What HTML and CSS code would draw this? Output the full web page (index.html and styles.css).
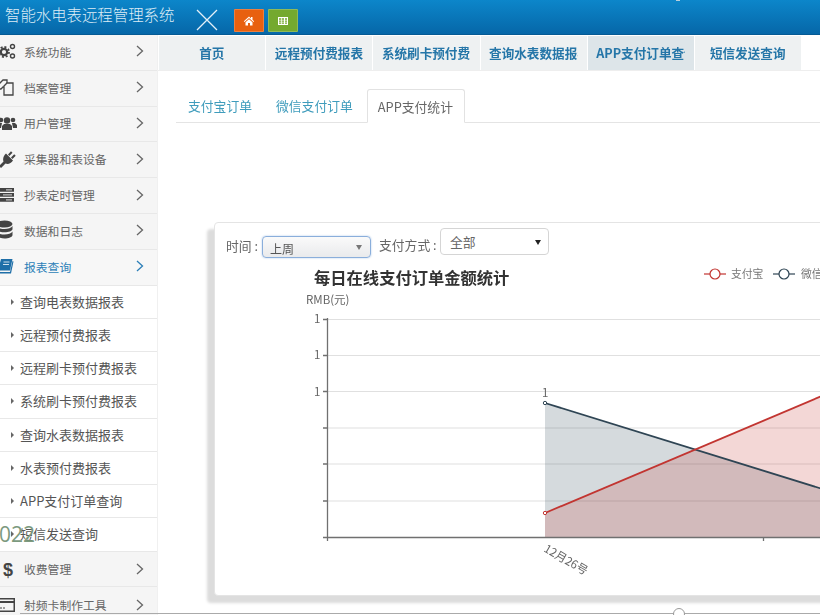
FILE: index.html
```html
<!DOCTYPE html>
<html lang="zh">
<head>
<meta charset="utf-8">
<title>智能水电表远程管理系统</title>
<link rel="stylesheet" href="styles.css">
</head>
<body>
<div class="app">
  <header class="header">
    <div class="brand">智能水电表远程管理系统</div>
    <svg class="close-x" viewBox="0 0 22 22"><path d="M1 1 21 21M21 1 1 21"/></svg>
    <button class="hbtn orange"><svg viewBox="0 0 12 12"><path d="M6 1.500 0.800 6.200l.7.7L6 3l4.500 3.900.7-.7L9.500 4.700V2H8v1.400zM2.500 7.200 6 4.200l3.500 3V10.500H7V8H5v2.500H2.500z"/></svg></button>
    <button class="hbtn green"><svg viewBox="0 0 12 12"><path d="M1 2h10v8H1zM2 3.200v1.500h2.300V3.200zm3 0v1.500h2V3.200zm3 0v1.500h2V3.200zM2 5.400v1.300h2.300V5.400zm3 0v1.300h2V5.400zm3 0v1.300h2V5.400zM2 7.400v1.400h2.300V7.400zm3 0v1.400h2V7.400zm3 0v1.400h2V7.400z" fill-rule="evenodd"/></svg></button>
    <i class="top-dot"></i>
  </header>
  <div class="body">
    <aside class="sidebar">
      <a class="item"><svg class="ico" viewBox="0 0 18 18"><g fill="none" stroke="#444"><circle cx="6" cy="10" r="3.200" stroke-width="2.200"/><circle cx="6" cy="10" r="5" stroke-width="1.800" stroke-dasharray="2 1.900"/><circle cx="14.500" cy="4.500" r="2" stroke-width="1.400"/><circle cx="14.500" cy="14" r="2" stroke-width="1.400"/></g></svg><span>系统功能</span><svg class="chev" viewBox="0 0 8 12"><path d="M1 1l5.500 5L1 11"/></svg></a>
      <a class="item"><svg class="ico" viewBox="0 0 18 18"><g fill="#f5f5f5" stroke="#444" stroke-width="1.300"><path d="M0 7 5 2h4v7H5l-2 2H0z"/><path d="M6 8l3-3h6v12H6z"/></g></svg><span>档案管理</span><svg class="chev" viewBox="0 0 8 12"><path d="M1 1l5.500 5L1 11"/></svg></a>
      <a class="item"><svg class="ico" viewBox="0 0 18 18"><g fill="#444"><circle cx="3" cy="6" r="2.300"/><circle cx="15" cy="6" r="2.300"/><circle cx="9" cy="6.500" r="3.200"/><path d="M-1 14v-3l2-2h3l-1 5zM19 14v-3l-2-2h-3l1 5zM4 16v-4l2-2h6l2 2v4z"/></g></svg><span>用户管理</span><svg class="chev" viewBox="0 0 8 12"><path d="M1 1l5.500 5L1 11"/></svg></a>
      <a class="item"><svg class="ico" viewBox="0 0 18 18"><g fill="#444"><path d="M8 3.500 15 10.500c-2 3-5 4-7.500 3L3 18l-2-2 4.500-4.500C4.500 9 5.500 5.500 8 3.500z"/><path d="M10 4.500 13 1.200l1.500 1.500-3.200 3.200zM13 7.500l3.200-3.200 1.500 1.500-3.200 3.200z"/></g></svg><span>采集器和表设备</span><svg class="chev" viewBox="0 0 8 12"><path d="M1 1l5.500 5L1 11"/></svg></a>
      <a class="item"><svg class="ico" viewBox="0 0 18 18"><path fill="#444" d="M-2 2h18v3.800H-2zM-2 7h18v3.800H-2zM-2 12h18v3.800H-2z"/><path stroke="#ddd" d="M8 3.900h6M5 8.900h9M8 13.900h6"/></svg><span>抄表定时管理</span><svg class="chev" viewBox="0 0 8 12"><path d="M1 1l5.500 5L1 11"/></svg></a>
      <a class="item"><svg class="ico" viewBox="0 0 18 18"><g fill="#444"><ellipse cx="6.500" cy="3" rx="8" ry="3.500"/><path d="M-1.500 5v3C-1.500 10 2.500 11.300 6.500 11.300S14.500 10 14.500 8V5c-1 2-4.500 3-8 3s-7-1-8-3z"/><path d="M-1.500 10.500v3.500C-1.500 16 2.500 17.500 6.500 17.500S14.500 16 14.500 14v-3.500c-1 2-4.500 3-8 3s-7-1-8-3z"/></g></svg><span>数据和日志</span><svg class="chev" viewBox="0 0 8 12"><path d="M1 1l5.500 5L1 11"/></svg></a>
      <a class="item active"><svg class="ico" viewBox="0 0 18 18"><path fill="#1f6fa8" d="M3 2h11.500L12 13.500H2.500c-.8 0-.8 1.500 0 1.500h9.500l2.500-11 1 .5L13 16.500H1.500C-.5 16.500-.5 14 0 13z"/><path stroke="#cfe0ec" d="M5.500 5h6M5 7.500h6"/></svg><span>报表查询</span><svg class="chev" viewBox="0 0 8 12"><path d="M1 1l5.500 5L1 11"/></svg></a>
      <ul class="submenu">
        <li>查询电表数据报表</li>
        <li>远程预付费报表</li>
        <li>远程刷卡预付费报表</li>
        <li>系统刷卡预付费报表</li>
        <li>查询水表数据报表</li>
        <li>水表预付费报表</li>
        <li>APP支付订单查询</li>
        <li>短信发送查询<b class="stamp">022</b></li>
      </ul>
      <a class="item low"><span class="dollar">$</span><span>收费管理</span><svg class="chev" viewBox="0 0 8 12"><path d="M1 1l5.500 5L1 11"/></svg></a>
      <a class="item low"><svg class="ico" viewBox="0 0 18 18"><path fill="#444" d="M-2 2h19v14H-2zM-.5 7v7.500h16V7zM-.5 3.500v1.500h16V3.500z" fill-rule="evenodd"/><path stroke="#444" d="M1 12h3M5 12h2"/></svg><span>射频卡制作工具</span><svg class="chev" viewBox="0 0 8 12"><path d="M1 1l5.500 5L1 11"/></svg></a>
    </aside>
    <main class="main">
      <nav class="navtabs">
        <a class="navtab"><span>首页</span></a>
        <a class="navtab"><span>远程预付费报表</span></a>
        <a class="navtab"><span>系统刷卡预付费报表</span></a>
        <a class="navtab"><span>查询水表数据报表</span></a>
        <a class="navtab current"><span>APP支付订单查询</span></a>
        <a class="navtab"><span>短信发送查询</span></a>
      </nav>
      <div class="subtabs">
        <a class="subtab">支付宝订单</a>
        <a class="subtab">微信支付订单</a>
        <a class="subtab on">APP支付统计</a>
      </div>
      <section class="card">
        <div class="filters">
          <label class="flabel first">时间 :</label>
          <div class="sel week">上周<i></i></div>
          <label class="flabel second">支付方式 :</label>
          <div class="sel pay">全部<i></i></div>
        </div>
        <svg class="chart" viewBox="215 262 700 333" width="700" height="333">
          <text x="314" y="284" class="c-title">每日在线支付订单金额统计</text>
          <g class="legend">
            <path d="M704 274h22" stroke="#c23531"/><circle cx="715" cy="274" r="5" fill="#fff" stroke="#c23531"/>
            <text x="731" y="278">支付宝</text>
            <path d="M773 274h22" stroke="#2f4554"/><circle cx="784" cy="274" r="5" fill="#fff" stroke="#2f4554"/>
            <text x="801" y="278">微信</text>
          </g>
          <text x="306" y="304" class="c-label">RMB(元)</text>
          <path class="grid" d="M328 319.500H900M328 355.500H900M328 391.500H900M328 428H900M328 464H900M328 501H900"/>
          <polygon points="545,403 900,513 900,537 545,537" fill="#2f4554" fill-opacity=".2"/>
          <polygon points="545,513 900,363 900,537 545,537" fill="#c23531" fill-opacity=".2"/>
          <path class="axis" d="M327.500 318V541M323 319.500h5M323 355.500h5M323 391.500h5M323 428h5M323 464h5M323 501h5M323 537.500H900M763.500 537v4"/>
          <polyline points="545,403 900,513" fill="none" stroke="#2f4554" stroke-width="1.800"/>
          <polyline points="545,513 900,363" fill="none" stroke="#c23531" stroke-width="1.800"/>
          <circle cx="545" cy="403" r="1.700" fill="#fff" stroke="#2f4554"/>
          <circle cx="545" cy="513" r="1.700" fill="#fff" stroke="#c23531"/>
          <g class="c-label">
            <text x="314" y="323">1</text>
            <text x="314" y="359">1</text>
            <text x="314" y="396">1</text>
            <text x="542" y="397">1</text>
            <text x="543" y="551" transform="rotate(30 543 551)">12月26号</text>
          </g>
        </svg>
      </section>
    </main>
  </div>
  <div class="slider"><i></i></div>
</div>
</body>
</html>
```
FILE: styles.css
```css
* { box-sizing: border-box; }
html, body { margin: 0; padding: 0; height: 100%; overflow: hidden; background: #fff; }
body { font-family: "Noto Sans CJK SC", "Open Sans", sans-serif; color: #666; }
.app { position: relative; width: 820px; height: 615px; overflow: hidden; filter: blur(.35px); }

.header { position: relative; display: flex; align-items: flex-start; height: 35px; background: linear-gradient(#0c86ca, #0667a8); border-bottom: 1px solid #055a94; }
.brand { margin: 4px 0 0 5px; width: 181px; font-size: 15.400px; line-height: 20px; white-space: nowrap; color: #dcecf6; font-weight: 300; }
.close-x { width: 22px; height: 22px; margin: 9px 16px 0 10px; fill: none; stroke: #e4f0f8; stroke-width: 1.300; flex: none; }
.hbtn { width: 30px; height: 23px; margin: 9px 4px 0 0; padding: 0; border: 1px solid rgba(255,255,255,.2); border-radius: 1px; display: flex; align-items: center; justify-content: center; }
.hbtn svg { width: 12px; height: 12px; fill: #fff; }
.orange { background: #e8600f; }
.green { background: #74a92f; }
.top-dot { position: absolute; left: 676px; top: 0; width: 4px; height: 1px; background: #b8cfdc; }

.body { display: flex; height: 580px; }
.sidebar { width: 158px; flex: none; background: #f5f5f5; border-right: 1px solid #f0f0f0; overflow: hidden; }
.item { display: flex; align-items: center; height: 35.800px; padding-bottom: 2px; border-bottom: 1px solid #e8e8e8; font-size: 11.800px; color: #666; }
.item.low { padding-bottom: 0; }
.item span { flex: 1; }
.item .ico { width: 18px; height: 18px; margin: 0 8px 0 -2px; flex: none; overflow: visible; }
.item .dollar { flex: none; width: 16px; margin: 4px 8px 0 0; text-align: center; font: bold 18px "Liberation Sans", sans-serif; color: #444; }
.chev { width: 8px; height: 12px; margin-right: 13px; fill: none; stroke: #666; stroke-width: 1.300; flex: none; }
.item.active { color: #2c7fb8; background: #f7f7f7; }
.item.active .chev { stroke: #2c7fb8; }

.submenu { list-style: none; margin: 0; padding: 0; background: #fff; }
.submenu li { position: relative; height: 33.250px; line-height: 32px; padding-left: 20px; font-size: 13px; color: #555; border-bottom: 1px solid #e8e8e8; white-space: nowrap; }
.submenu li::before { content: ""; position: absolute; left: 11px; top: 13px; border-left: 3px solid #666; border-top: 3px solid transparent; border-bottom: 3px solid transparent; }
.stamp { position: absolute; left: -1px; top: 4px; font: 400 21px/24px "Open Sans", sans-serif; color: #7c9a7e; }

.main { flex: 1; min-width: 0; }
.navtabs { display: flex; height: 36px; padding: 1px 0 0 1px; gap: 1px; border-bottom: 1px solid #eee; }
.navtab { width: 106.200px; height: 34px; padding: 0 9.200px 0 8.500px; background: #eef1f2; text-align: center; font-size: 12.600px; font-weight: 700; line-height: 34px; color: #2576a8; }
.navtab span { display: block; overflow: hidden; white-space: nowrap; }
.navtab.current { background: #dde5e9; }

.subtabs { display: flex; height: 52px; margin: 0 0 0 18px; padding: 18px 0 0 0; border-bottom: 1px solid #e4e4e4; }
.subtab { height: 34px; padding: 0 12px; line-height: 33px; font-size: 12.800px; color: #3f9cbc; }
.subtab.on { margin: 0 0 -1px 2px; background: #fff; color: #666; border: 1px solid #e2e2e2; border-bottom-color: #fff; border-radius: 3px 3px 0 0; padding: 0 11px 0 10px; }

.card { width: 700px; height: 374px; margin: 99px 0 0 56px; background: #fff; border: 1px solid #e4e4e4; border-radius: 4px; box-shadow: -7px 7px 3px #dcdcdc; }
.filters { display: flex; align-items: flex-start; height: 39px; padding-left: 11px; font-size: 12.800px; color: #666; }
.flabel { line-height: 20px; margin-top: 13px; white-space: nowrap; }
.flabel.first { width: 36px; }
.flabel.second { width: 61px; margin-left: 8px; margin-top: 12px; }
.sel { position: relative; flex: none; }
.sel i { position: absolute; top: 50%; margin-top: -2px; border-top: 5px solid #777; border-left: 3px solid transparent; border-right: 3px solid transparent; }
.week { width: 109px; height: 22px; margin-top: 13px; padding-left: 7px; line-height: 23px; font-size: 12px; background: linear-gradient(#fafafa, #e9eaec); border: 1px solid #8aaedb; border-radius: 4px; box-shadow: 0 0 2px #a9c4e6; color: #555; }
.week i { right: 8px; }
.pay { width: 109px; height: 27px; margin-top: 5px; padding-left: 9px; line-height: 25px; background: #fff; border: 1px solid #d5d5d5; border-radius: 4px; color: #666; }
.pay i { right: 7px; border-top-color: #222; }
.chart { display: block; overflow: hidden; }
.c-title { font-size: 16.300px; font-weight: 700; fill: #333; }
.c-label { font-size: 11.500px; fill: #666; }
.legend text { font-size: 10.800px; fill: #777; }
.legend path, .legend circle { stroke-width: 1.200; }
.grid { stroke: #e0e0e0; stroke-width: 1.200; fill: none; }
.axis { stroke: #707070; stroke-width: 1.300; fill: none; }

.slider { position: absolute; left: 20px; right: 0; top: 613px; height: 1px; background: #aaa; }
.slider i { position: absolute; left: 653px; top: -5px; width: 12px; height: 12px; background: #fff; border: 1px solid #999; border-radius: 50%; }
```
